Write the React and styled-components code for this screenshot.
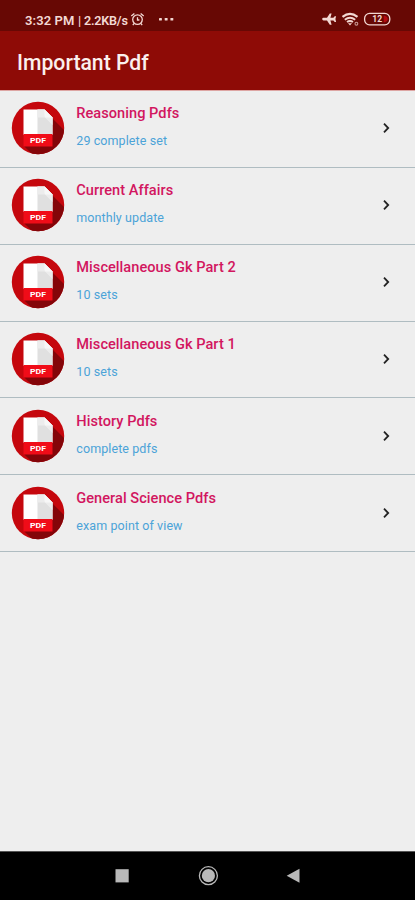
import React from "react";
import styled, { createGlobalStyle } from "styled-components";

const GlobalStyle = createGlobalStyle`
  * { box-sizing: border-box; }
  body { margin: 0; background: #eeeeee; font-family: Roboto, sans-serif; }
`;

const Screen = styled.div`
  display: flex;
  flex-direction: column;
  width: 415px;
  height: 900px;
  overflow: hidden;
  background: #eeeeee;
`;

const StatusBar = styled.header`
  display: flex;
  justify-content: space-between;
  height: 31px;
  padding: 8px 24px 0 25px;
  background: #670804;
  color: #f3d8d3;
`;

const StatusGroup = styled.div`
  display: flex;
  align-items: center;
  height: 22px;
  svg { display: block; flex: none; }
`;

const Clock = styled.span`
  font-size: 13px;
  font-weight: 600;
  line-height: 23px;
  padding-top: 2px;
  white-space: nowrap;
  width: 53px;
  letter-spacing: 0.1px;
`;

const Speed = styled(Clock)`
  width: 51px;
  font-size: 12.6px;
  letter-spacing: -0.2px;
`;

const AppBar = styled.div`
  display: flex;
  align-items: center;
  height: 59px;
  padding: 4px 17px 0;
  background: #8e0b06;
`;

const Title = styled.h1`
  margin: 0;
  color: #fbf0ed;
  font-size: 21.2px;
  font-weight: 500;
  line-height: 28px;
`;

const List = styled.ul`
  flex: 1;
  margin: 0;
  padding: 0;
  list-style: none;
  border-top: 1px solid #dda5a3;
`;

const Row = styled.li`
  display: flex;
  align-items: center;
  height: 76.87px;
  padding: 0 23px 1px 11px;
  border-bottom: 1.5px solid #afbcc1;
`;

const RowText = styled.div`
  flex: 1;
  margin-left: 11.3px;
  padding-bottom: 3px;
`;

const RowTitle = styled.div`
  color: #d2165f;
  font-size: 14.6px;
  font-weight: 500;
  line-height: 20px;
  letter-spacing: 0.03px;
`;

const RowSubtitle = styled.div`
  margin-top: 9px;
  color: #4ba3d8;
  font-size: 12.5px;
  line-height: 18px;
  letter-spacing: 0.09px;
`;

const NavBar = styled.nav`
  display: flex;
  justify-content: center;
  height: 49px;
  background: #000;
  border-top: 1px solid #555;
  svg { display: block; }
`;

const PdfIcon = () => (
  <svg width="54" height="54" viewBox="0 0 54 54">
    <defs>
      <clipPath id="disc"><circle cx="27" cy="27" r="26.2" /></clipPath>
    </defs>
    <g clipPath="url(#disc)">
      <rect width="54" height="54" fill="#c5070d" />
      <path d="M41 17L54 30V54H22L13 45H41Z" fill="#840509" />
    </g>
    <path d="M12.5 8.5H33.5L41.5 16.5V34H12.5Z" fill="#fff" />
    <path d="M26.5 8.5H33.5L41.5 16.5V34H26.5Z" fill="#e0e0e0" />
    <path d="M26.5 8.5H33.5L41.5 16.5V24L34 16.5H26.5Z" fill="#ececec" />
    <path d="M33.5 8.5L41.5 16.5H35Q33.5 16.5 33.5 15Z" fill="#f7f7f7" />
    <rect x="12.5" y="33" width="29" height="12.5" fill="#f00c18" />
    <text x="27" y="42.3" textAnchor="middle" fill="#fff" fontFamily="Roboto, sans-serif" fontWeight="700" fontSize="8" textLength="16" lengthAdjust="spacingAndGlyphs">PDF</text>
  </svg>
);

const Chevron = () => (
  <svg width="12" height="14" viewBox="0 0 12 14">
    <path d="M4 2.7L8.2 7L4 11.3" fill="none" stroke="#222" strokeWidth="1.8" />
  </svg>
);

const AlarmAndDots = () => (
  <svg width="48" height="18" viewBox="0 0 48 18" fill="none" stroke="currentColor" strokeWidth="1.3">
    <circle cx="8.5" cy="9.6" r="4.8" />
    <path d="M2.3 6L5.4 3.4M14.7 6L11.6 3.4M8.5 7.2V10H10.4M5.2 13.4L3.8 15.2M11.8 13.4L13.2 15.2" />
    <g fill="currentColor" stroke="none">
      <rect x="30" y="7.9" width="2.9" height="2.7" rx=".7" />
      <rect x="35.7" y="7.9" width="2.9" height="2.7" rx=".7" />
      <rect x="41.4" y="7.9" width="2.9" height="2.7" rx=".7" />
    </g>
  </svg>
);

const DeviceStatus = () => (
  <svg width="70" height="18" viewBox="0 0 70 18">
    <path d="M15.2 9.1Q15.2 7.8 13.9 7.8H10.4L7.6 3.4H5.8L7 7.8H4L2.7 6.3H1.3L2 9.1L1.3 11.9H2.7L4 10.4H7L5.8 14.8H7.6L10.4 10.4H13.9Q15.2 10.4 15.2 9.1Z" fill="currentColor" transform="matrix(-1 0 0 1 16.4 0)" />
    <g fill="none" stroke="currentColor">
      <path d="M21.5 6.9Q29 .8 36.5 6.9" strokeWidth="2.2" />
      <path d="M23.8 9.7Q29 5.6 34.2 9.7" strokeWidth="1.9" />
      <path d="M26 12.1Q29 9.9 32 12.1" strokeWidth="1.8" />
      <path d="M27.5 13.4H30.5L29 15.2Z" fill="currentColor" strokeWidth=".5" />
      <circle cx="35.4" cy="13.7" r="1.4" strokeWidth="1.1" opacity=".7" />
      <rect x="43.6" y="3.4" width="25.2" height="11.4" rx="5" strokeWidth="1.3" />
    </g>
    <path d="M62.7 5.7H63.9Q66.8 6.5 66.8 9T63.9 12.3H62.7Z" fill="#b40a10" />
    <text x="56.3" y="12.2" textAnchor="middle" fill="currentColor" fontFamily="Roboto, sans-serif" fontWeight="700" fontSize="8.6">12</text>
  </svg>
);

const NavIcons = () => (
  <svg width="190" height="48" viewBox="0 0 190 48" fill="#b9b9b9">
    <rect x="2.5" y="17.2" width="13.2" height="13.2" />
    <circle cx="95.4" cy="23.7" r="9" fill="none" stroke="#b9b9b9" strokeWidth="1.3" />
    <circle cx="95.4" cy="23.7" r="6.6" />
    <path d="M173.7 23.7L186.5 16.7V30.7Z" />
  </svg>
);

const items = [
  ["Reasoning Pdfs", "29 complete set"],
  ["Current Affairs", "monthly update"],
  ["Miscellaneous Gk Part 2", "10 sets"],
  ["Miscellaneous Gk Part 1", "10 sets"],
  ["History Pdfs", "complete pdfs"],
  ["General Science Pdfs", "exam point of view"],
];

export default function App() {
  return (
    <Screen>
      <GlobalStyle />
      <StatusBar>
        <StatusGroup>
          <Clock>3:32 PM</Clock>
          <Speed>| 2.2KB/s</Speed>
          <AlarmAndDots />
        </StatusGroup>
        <StatusGroup>
          <DeviceStatus />
        </StatusGroup>
      </StatusBar>
      <AppBar>
        <Title>Important Pdf</Title>
      </AppBar>
      <List>
        {items.map(([title, subtitle]) => (
          <Row key={title}>
            <PdfIcon />
            <RowText>
              <RowTitle>{title}</RowTitle>
              <RowSubtitle>{subtitle}</RowSubtitle>
            </RowText>
            <Chevron />
          </Row>
        ))}
      </List>
      <NavBar>
        <NavIcons />
      </NavBar>
    </Screen>
  );
}
